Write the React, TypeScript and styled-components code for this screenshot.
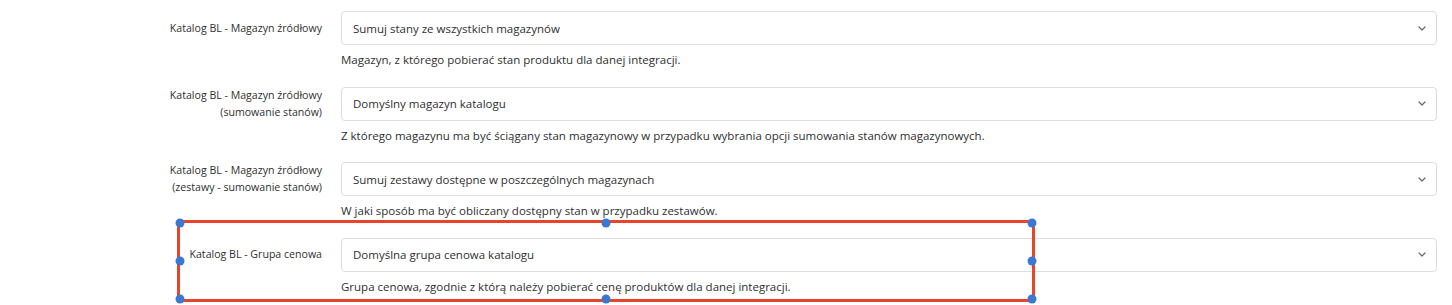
import styled, { createGlobalStyle } from "styled-components"

const GlobalStyle = createGlobalStyle`
  body {
    margin: 0;
    background: #fff;
    font-family: "Open Sans", "Liberation Sans", sans-serif;
    color: #333;
  }
`

const rows = [
  {
    label: ["Katalog BL - Magazyn źródłowy"],
    value: "Sumuj stany ze wszystkich magazynów",
    help: "Magazyn, z którego pobierać stan produktu dla danej integracji.",
  },
  {
    label: ["Katalog BL - Magazyn źródłowy", "(sumowanie stanów)"],
    value: "Domyślny magazyn katalogu",
    help: "Z którego magazynu ma być ściągany stan magazynowy w przypadku wybrania opcji sumowania stanów magazynowych.",
  },
  {
    label: ["Katalog BL - Magazyn źródłowy", "(zestawy - sumowanie stanów)"],
    value: "Sumuj zestawy dostępne w poszczególnych magazynach",
    help: "W jaki sposób ma być obliczany dostępny stan w przypadku zestawów.",
  },
  {
    label: ["Katalog BL - Grupa cenowa"],
    value: "Domyślna grupa cenowa katalogu",
    help: "Grupa cenowa, zgodnie z którą należy pobierać cenę produktów dla danej integracji.",
  },
]

const handles = [
  ["0%", "0%"],
  ["50%", "0%"],
  ["100%", "0%"],
  ["0%", "50%"],
  ["100%", "50%"],
  ["0%", "100%"],
  ["50%", "100%"],
  ["100%", "100%"],
]

const Chevron = () => (
  <svg width="8" height="5" viewBox="0 0 8 5" fill="none">
    <path d="M1 1l3 3 3-3" stroke="#666" strokeWidth="1.2" strokeLinecap="round" strokeLinejoin="round" />
  </svg>
)

const App = () => {
  return (
    <Page>
      <GlobalStyle />
      <Form>
        {rows.map((r, i) => (
          <Row key={i}>
            <Label>
              {r.label.map((l, j) => (
                <span key={j}>{l}</span>
              ))}
            </Label>
            <Field>
              <Select>
                <span>{r.value}</span>
                <Chevron />
              </Select>
              <Help>{r.help}</Help>
            </Field>
          </Row>
        ))}
      </Form>
      <Selection>
        {handles.map(([x, y], i) => (
          <Handle key={i} $x={x} $y={y} />
        ))}
      </Selection>
    </Page>
  )
}

export default App

const Page = styled.div`
  position: relative;
  width: 1452px;
  height: 305px;
  overflow: hidden;
`

const Form = styled.div`
  padding: 11px 15px 0 0;
  display: flex;
  flex-direction: column;
  gap: 17.67px;
`

const Row = styled.div`
  display: grid;
  grid-template-columns: 322px 1fr;
  column-gap: 19px;
  align-items: start;
`

const Label = styled.div`
  height: 34px;
  display: flex;
  flex-direction: column;
  justify-content: center;
  align-items: flex-end;
  text-align: right;
  font-size: 10.6px;
  line-height: 17px;
  color: #2f2f2f;
`

const Field = styled.div`
  display: flex;
  flex-direction: column;
`

const Select = styled.div`
  box-sizing: border-box;
  height: 34px;
  border: 1px solid #dcdde0;
  border-radius: 4px;
  padding: 0 10px 0 11px;
  display: flex;
  align-items: center;
  justify-content: space-between;
  font-size: 11.5px;
  color: #2f2f2f;
`

const Help = styled.div`
  margin-top: 6px;
  height: 18px;
  line-height: 18px;
  font-size: 11.5px;
  color: #2f2f2f;
`

const Selection = styled.div`
  position: absolute;
  left: 177px;
  top: 220px;
  width: 858px;
  height: 82px;
  box-sizing: border-box;
  border: 3px solid #e8442b;
`

const Handle = styled.div<{ $x: string; $y: string }>`
  position: absolute;
  left: ${(p) => p.$x};
  top: ${(p) => p.$y};
  width: 9px;
  height: 9px;
  border-radius: 50%;
  background: #3a78d2;
  transform: translate(-50%, -50%);
`
